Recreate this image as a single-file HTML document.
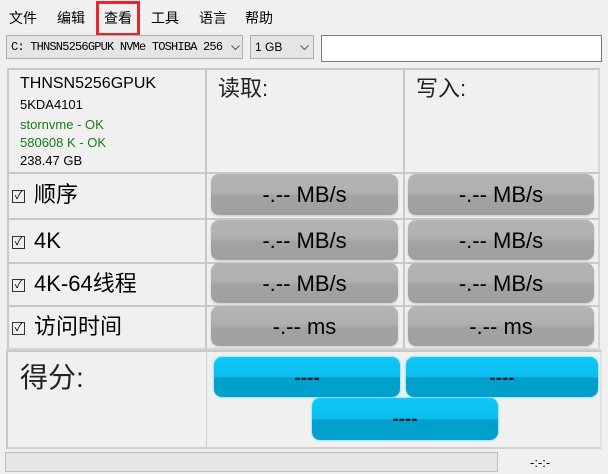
<!DOCTYPE html>
<html><head><meta charset="utf-8"><style>
*{margin:0;padding:0;box-sizing:border-box}
body{width:608px;height:474px;background:#f0f0f0;position:relative;overflow:hidden;font-family:"Liberation Sans","Noto Sans CJK SC",sans-serif;color:#000}
.a{position:absolute}
.menu{top:9px;font-size:14px;line-height:18px}
.cell{position:absolute;border:2px solid #d6d6d6;border-top-color:#c8c8c8;border-left-color:#c8c8c8;background:#f0f0f0}
.gb{position:absolute;border-radius:8px;background:linear-gradient(#b4b4b4 0,#b0b0b0 45%,#a2a2a2 55%,#a0a0a0 100%);box-shadow:0 1px 2px #c8c8c8;font-size:22px;text-align:center;line-height:42px;color:#000}
.cb{position:absolute;border-radius:8px;background:linear-gradient(#10c8f5 0,#0bbdf0 50%,#00a0cc 52%,#00a0cc 100%);box-shadow:0 0 2px #30d0ff;font-size:19px;font-weight:bold;text-align:center;line-height:44px;color:#0a2030}
.lab{position:absolute;font-size:22px;line-height:24px}
.chk{display:inline-block;width:13px;height:13px;border:1px solid #333;font-size:11px;line-height:11px;text-align:center;vertical-align:3px;margin-right:9px}
</style></head><body>
<div class="a menu" style="left:9px">文件</div>
<div class="a menu" style="left:57px">编辑</div>
<div class="a menu" style="left:104px">查看</div>
<div class="a" style="left:96px;top:1px;width:44px;height:35px;border:3px solid #e8242c"></div>
<div class="a menu" style="left:151px">工具</div>
<div class="a menu" style="left:199px">语言</div>
<div class="a menu" style="left:245px">帮助</div>

<div class="a" style="left:6px;top:35px;width:237px;height:24px;border:1px solid #adadad;background:#e5e5e5;font-family:'Liberation Mono',monospace;font-size:12px;line-height:22px;padding-left:4px;letter-spacing:-0.8px">C: THNSN5256GPUK NVMe TOSHIBA 256<svg style="position:absolute;left:224px;top:9px" width="9" height="6"><path d="M0.5 0.5L4.5 4.5L8.5 0.5" fill="none" stroke="#555"/></svg></div>
<div class="a" style="left:250px;top:35px;width:64px;height:24px;border:1px solid #adadad;background:#e5e5e5;font-size:12px;line-height:22px;padding-left:4px">1 GB<svg style="position:absolute;left:49px;top:9px" width="9" height="6"><path d="M0.5 0.5L4.5 4.5L8.5 0.5" fill="none" stroke="#555"/></svg></div>
<div class="a" style="left:321px;top:35px;width:281px;height:27px;border:1px solid #7a7a7a;background:#fff"></div>

<div class="cell" style="left:7px;top:68px;width:200px;height:106px"></div>
<div class="cell" style="left:205px;top:68px;width:200px;height:106px"></div>
<div class="cell" style="left:403px;top:68px;width:197px;height:106px"></div>
<div class="a" style="left:20px;top:74px;font-size:16px;line-height:20px">THNSN5256GPUK</div>
<div class="a" style="left:20px;top:97px;font-size:13px">5KDA4101</div>
<div class="a" style="left:20px;top:117px;font-size:13px;color:#1a7a1a">stornvme - OK</div>
<div class="a" style="left:20px;top:135px;font-size:13px;color:#1a7a1a">580608 K - OK</div>
<div class="a" style="left:20px;top:153px;font-size:13px">238.47 GB</div>
<div class="a" style="left:218px;top:71px;font-size:22px;color:#222">读取:</div>
<div class="a" style="left:416px;top:71px;font-size:22px;color:#222">写入:</div>

<div class="cell" style="left:7px;top:172px;width:200px;height:48px"></div>
<div class="cell" style="left:205px;top:172px;width:200px;height:48px"></div>
<div class="cell" style="left:403px;top:172px;width:197px;height:48px"></div>
<div class="cell" style="left:7px;top:218px;width:200px;height:46px"></div>
<div class="cell" style="left:205px;top:218px;width:200px;height:46px"></div>
<div class="cell" style="left:403px;top:218px;width:197px;height:46px"></div>
<div class="cell" style="left:7px;top:262px;width:200px;height:45px"></div>
<div class="cell" style="left:205px;top:262px;width:200px;height:45px"></div>
<div class="cell" style="left:403px;top:262px;width:197px;height:45px"></div>
<div class="cell" style="left:7px;top:305px;width:200px;height:45px"></div>
<div class="cell" style="left:205px;top:305px;width:200px;height:45px"></div>
<div class="cell" style="left:403px;top:305px;width:197px;height:45px"></div>

<div class="lab" style="left:12px;top:183px"><span class="chk">✓</span>顺序</div>
<div class="lab" style="left:12px;top:229px"><span class="chk">✓</span>4K</div>
<div class="lab" style="left:12px;top:272px"><span class="chk">✓</span>4K-64线程</div>
<div class="lab" style="left:12px;top:315px"><span class="chk">✓</span>访问时间</div>

<div class="gb" style="left:211px;top:174px;width:187px;height:41px">-.-- MB/s</div>
<div class="gb" style="left:408px;top:174px;width:186px;height:41px">-.-- MB/s</div>
<div class="gb" style="left:211px;top:220px;width:187px;height:40px">-.-- MB/s</div>
<div class="gb" style="left:408px;top:220px;width:186px;height:40px">-.-- MB/s</div>
<div class="gb" style="left:211px;top:263px;width:187px;height:40px">-.-- MB/s</div>
<div class="gb" style="left:408px;top:263px;width:186px;height:40px">-.-- MB/s</div>
<div class="gb" style="left:211px;top:306px;width:187px;height:40px">-.-- ms</div>
<div class="gb" style="left:408px;top:306px;width:186px;height:40px">-.-- ms</div>

<div class="a" style="left:6px;top:350px;width:596px;height:99px;border:2px solid #c8c8c8;border-right-color:#e0e0e0;border-bottom-color:#d0d0d0"></div>
<div class="a" style="left:206px;top:352px;width:1px;height:96px;background:#d0d0d0"></div>
<div class="a" style="left:20px;top:356px;font-size:28px;color:#222">得分:</div>
<div class="cb" style="left:214px;top:357px;width:186px;height:40px">----</div>
<div class="cb" style="left:406px;top:357px;width:192px;height:40px">----</div>
<div class="cb" style="left:312px;top:398px;width:186px;height:42px">----</div>

<div class="a" style="left:5px;top:452px;width:493px;height:20px;border:1px solid #bcbcbc;background:#e6e6e6"></div>
<div class="a" style="left:530px;top:455px;font-size:13px">-:-:-</div>
</body></html>
